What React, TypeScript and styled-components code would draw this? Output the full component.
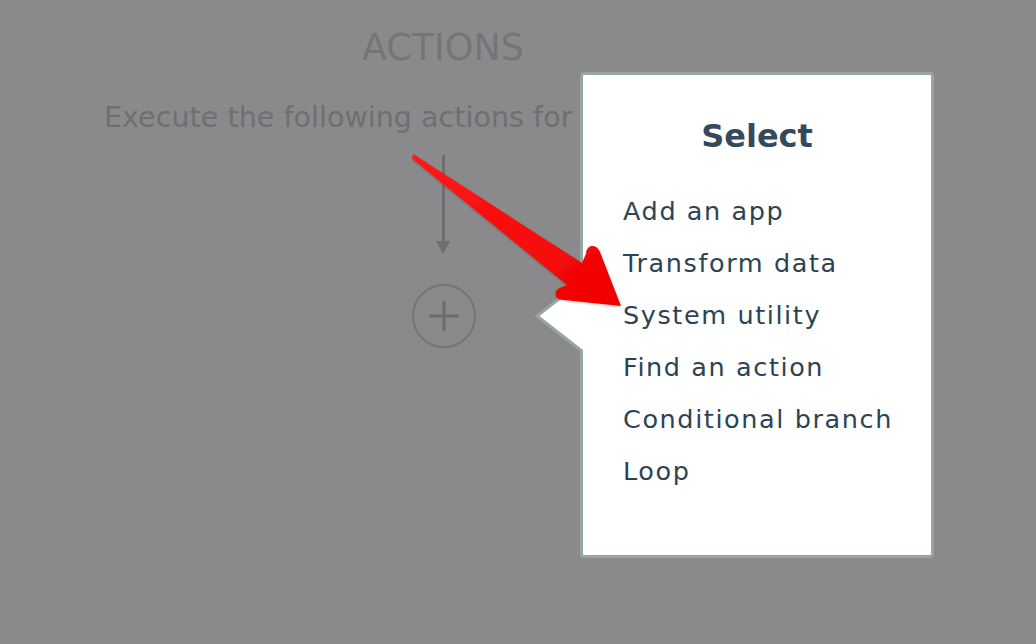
import React from "react";
import styled, { createGlobalStyle } from "styled-components";

const Global = createGlobalStyle`
  html, body { margin: 0; padding: 0; }
  body {
    background: #8a8a8c;
    font-family: "DejaVu Sans", Verdana, sans-serif;
    overflow: hidden;
  }
`;

const Page = styled.div`
  position: relative;
  width: 1036px;
  height: 644px;
  background: #8a8a8c;
  overflow: hidden;
`;

const Flow = styled.div`
  width: 886px;
  display: flex;
  flex-direction: column;
  align-items: center;
  padding-top: 26px;
`;

const Title = styled.h1`
  margin: 0;
  font-size: 36.5px;
  line-height: 44px;
  font-weight: 400;
  color: #757577;
`;

const Description = styled.p`
  margin: 29px 0 0 104px;
  align-self: flex-start;
  white-space: nowrap;
  font-size: 28.6px;
  line-height: 36px;
  color: #6f6f71;
`;

const Connector = styled.div`
  margin-top: 20px;
  display: flex;
  flex-direction: column;
  align-items: center;
`;

const Stem = styled.div`
  width: 3px;
  height: 86px;
  background: #6e6e70;
`;

const Head = styled.div`
  width: 0;
  height: 0;
  border-left: 7px solid transparent;
  border-right: 7px solid transparent;
  border-top: 13px solid #6e6e70;
`;

const AddButton = styled.button`
  margin-top: 30px;
  width: 64px;
  height: 64px;
  border-radius: 50%;
  border: 2px solid #737577;
  background: transparent;
  display: flex;
  align-items: center;
  justify-content: center;
  padding: 0;
  position: relative;
  left: 1px;
`;

const Popup = styled.div`
  position: absolute;
  left: 580px;
  top: 72px;
  width: 354px;
  height: 486px;
  box-sizing: border-box;
  border: 3px solid #98a5a5;
  border-radius: 4px;
  background: #ffffff;
  padding: 41px 0 0 40px;
  z-index: 2;
`;

const Caret = styled.svg`
  position: absolute;
  left: -49px;
  top: 205px;
  overflow: visible;
`;

const PopupTitle = styled.h2`
  margin: 0 0 29px -40px;
  text-align: center;
  font-size: 32px;
  line-height: 40px;
  font-weight: 700;
  color: #34495e;
`;

const Menu = styled.ul`
  list-style: none;
  margin: 0;
  padding: 0;
`;

const MenuItem = styled.li`
  font-size: 25.5px;
  line-height: 52px;
  letter-spacing: 1.6px;
  color: #2c4356;
  white-space: nowrap;
`;

const Annotation = styled.svg`
  position: absolute;
  left: 0;
  top: 0;
  z-index: 3;
  pointer-events: none;
`;

const items = [
  "Add an app",
  "Transform data",
  "System utility",
  "Find an action",
  "Conditional branch",
  "Loop",
];

export default function App() {
  return (
    <Page>
      <Global />
      <Flow>
        <Title>ACTIONS</Title>
        <Description>Execute the following actions for each item</Description>
        <Connector>
          <Stem />
          <Head />
        </Connector>
        <AddButton aria-label="Add action">
          <svg width="34" height="34" viewBox="0 0 34 34">
            <path d="M17 2 V32 M2 17 H32" stroke="#6b6e70" strokeWidth="3" />
          </svg>
        </AddButton>
      </Flow>

      <Popup>
        <Caret width="52" height="74">
          <path d="M48 0.8 L3 36 L48 71.2 L53 71.2 L53 0.8 Z" fill="#ffffff" />
          <polyline
            points="48.5,0.5 3,36 48.5,71.5"
            fill="none"
            stroke="#98a5a5"
            strokeWidth="3"
          />
        </Caret>
        <PopupTitle>Select</PopupTitle>
        <Menu>
          {items.map((t) => (
            <MenuItem key={t}>{t}</MenuItem>
          ))}
        </Menu>
      </Popup>

      <Annotation width="1036" height="644" viewBox="0 0 1036 644">
        <defs>
          <linearGradient id="rg" x1="0" y1="0" x2="1" y2="1">
            <stop offset="0" stopColor="#ff1a1a" />
            <stop offset="1" stopColor="#f00000" />
          </linearGradient>
          <filter id="sh" x="-10%" y="-10%" width="130%" height="130%">
            <feDropShadow dx="0" dy="1" stdDeviation="1" floodColor="#000" floodOpacity="0.25" />
          </filter>
        </defs>
        <path
          filter="url(#sh)"
          fill="url(#rg)"
          d="M414 154.5 Q411 156 413 159.5 L567 285 L561 287.5 Q554 290 556 296 Q558 300 564 300 L621 306 L600 252 Q597 245 591 246 Q586 248 586 254 L582 263 Z"
        />
      </Annotation>
    </Page>
  );
}
